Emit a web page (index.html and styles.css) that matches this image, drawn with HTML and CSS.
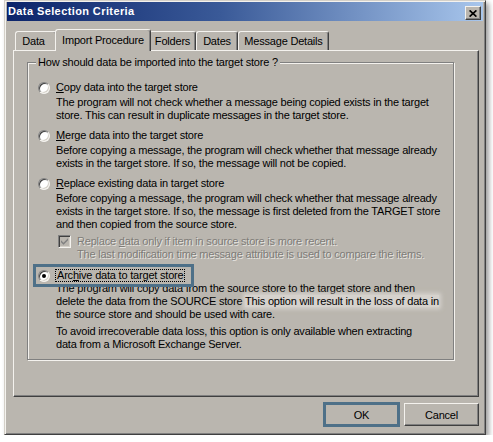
FILE: index.html
```html
<!DOCTYPE html>
<html lang="en">
<head>
<meta charset="utf-8">
<title>Data Selection Criteria</title>
<link rel="stylesheet" href="styles.css">
</head>
<body>
<div class="window">
  <div class="titlebar">
    <span class="title">Data Selection Criteria</span>
    <button class="close" aria-label="Close">
      <svg width="8" height="7" viewBox="0 0 8 7"><path d="M0.6 0.4 L7.4 6.6 M7.4 0.4 L0.6 6.6" stroke="#000" stroke-width="1.7" fill="none"/></svg>
    </button>
  </div>
  <div class="client">
    <div class="tabs">
      <div class="tab tab-data">Data</div>
      <div class="tab tab-import active">Import Procedure</div>
      <div class="tab tab-folders">Folders</div>
      <div class="tab tab-dates">Dates</div>
      <div class="tab tab-details">Message Details</div>
    </div>
    <div class="panel">
      <fieldset class="group">
        <legend>How should data be imported into the target store ?</legend>

        <div class="option">
          <div class="choice"><span class="radio"></span><span class="label"><u>C</u>opy data into the target store</span></div>
          <p class="desc">The program will not check whether a message being copied exists in the target<br>store. This can result in duplicate messages in the target store.</p>
        </div>

        <div class="option">
          <div class="choice"><span class="radio"></span><span class="label"><u>M</u>erge data into the target store</span></div>
          <p class="desc">Before copying a message, the program will check whether that message already<br>exists in the target store. If so, the message will not be copied.</p>
        </div>

        <div class="option">
          <div class="choice"><span class="radio"></span><span class="label"><u>R</u>eplace existing data in target store</span></div>
          <p class="desc">Before copying a message, the program will check whether that message already<br>exists in the target store. If so, the message is first deleted from the TARGET store<br>and then copied from the source store.</p>
          <div class="sub">
            <div class="sub-row">
              <span class="check">
                <svg width="7" height="7" viewBox="0 0 7 7"><path d="M0 2.2 L2.5 4.7 L7 0.2 V2.2 L2.5 6.7 L0 4.2 Z" fill="#808080"/></svg>
              </span>
              <span class="disabled">Replace <u>d</u>ata only if item in source store is more recent.</span>
            </div>
            <div class="disabled sub-note">The last modification time message attribute is used to compare the items.</div>
          </div>
        </div>

        <div class="option option-archive">
          <div class="choice marked"><span class="radio checked"></span><span class="label focus">Arc<u>h</u>ive data to target store</span></div>
          <p class="desc desc-tight">The program will copy data from the source store to the target store and then<br>delete the data from the SOURCE store <span class="hilite">This option will result in the loss of data in</span><br>the source store and should be used with care.</p>
          <p class="desc desc-note">To avoid irrecoverable data loss, this option is only available when extracting<br>data from a Microsoft Exchange Server.</p>
        </div>
      </fieldset>
    </div>
    <div class="buttons">
      <button class="btn btn-ok">OK</button>
      <button class="btn">Cancel</button>
    </div>
  </div>
</div>
</body>
</html>
```

FILE: styles.css
```css
* {
  box-sizing: border-box;
}

body {
  margin: 0;
  background: #fff;
  font-family: "Liberation Sans", Arial, sans-serif;
  font-size: 11px;
  letter-spacing: -0.2px;
  color: #000;
}

/* dialog frame */
.window {
  margin-left: 4px;
  width: 482px;
  height: 435px;
  padding: 1px 2px 2px;
  display: flex;
  flex-direction: column;
  background: #bab6af;
  border: 1px solid;
  border-color: #d4d0c8 #404040 #404040 #d4d0c8;
  box-shadow: inset 1px 1px 0 #f4f2ee, inset -1px -1px 0 #808080, 3px 3px 5px rgba(0, 0, 0, 0.38);
}

.titlebar {
  height: 19px;
  display: flex;
  align-items: flex-start;
  background: linear-gradient(to right, #0c246a 0%, #3a5a98 45%, #a8c6ec 100%);
  color: #fff;
}

.title {
  padding-left: 1px;
  line-height: 19px;
  font-weight: bold;
  letter-spacing: 0.4px;
}

.close {
  margin: 4px 2px 0 auto;
  width: 16px;
  height: 14px;
  padding: 0;
  display: flex;
  align-items: center;
  justify-content: center;
  background: #bab6af;
  border: 1px solid;
  border-color: #f4f2ee #404040 #404040 #f4f2ee;
  box-shadow: inset -1px -1px 0 #808080;
}

.client {
  flex: 1;
  padding: 8px 4px 0 6px;
  display: flex;
  flex-direction: column;
}

/* tab strip */
.tabs {
  height: 21px;
  padding-left: 2px;
  display: flex;
  align-items: flex-end;
}

.tab {
  height: 19px;
  line-height: 18px;
  text-align: center;
  white-space: nowrap;
  background: #bab6af;
  border: 1px solid;
  border-bottom: 0;
  border-color: #f4f2ee #404040 transparent #f4f2ee;
  border-radius: 3px 3px 0 0;
  box-shadow: inset -1px 0 0 #808080;
}

.tab-data { width: 42px; padding-right: 5px; }
.tab-import { width: 92px; }
.tab-folders { width: 47px; }
.tab-dates { width: 42px; }
.tab-details { width: 91px; }

.tab.active {
  position: relative;
  z-index: 1;
  width: 96px;
  height: 22px;
  line-height: 20px;
  margin: 0 -2px -1px;
}

/* page under the tabs */
.panel {
  height: 347px;
  padding: 5px 24px 0 13px;
  border: 1px solid;
  border-color: #f4f2ee #404040 #404040 #f4f2ee;
  box-shadow: inset -1px -1px 0 #808080;
}

.group {
  margin: 0;
  min-width: 0;
  height: 304px;
  padding: 12px 0 0 10px;
  border: 1px solid #808080;
  box-shadow: 1px 1px 0 #f4f2ee, inset 1px 1px 0 #f4f2ee;
}

.group legend {
  margin-left: -2px;
  padding: 0 2px;
  line-height: 13px;
  background: #bab6af;
}

.option + .option {
  margin-top: 7px;
}

.choice {
  display: flex;
  align-items: center;
  height: 13px;
  line-height: 13px;
}

.radio {
  position: relative;
  flex: none;
  width: 12px;
  height: 12px;
  margin-right: 6px;
  border-radius: 50%;
  background: #fff;
  border: 1px solid;
  border-color: #808080 #f4f2ee #f4f2ee #808080;
  box-shadow: inset 1px 1px 0 #404040, inset -1px -1px 0 #d4d0c8;
}

.radio.checked::after {
  content: "";
  position: absolute;
  left: 3px;
  top: 3px;
  width: 4px;
  height: 4px;
  border-radius: 50%;
  background: #000;
}

.label {
  white-space: nowrap;
}

.desc {
  margin: 2px 0 0;
  padding-left: 18px;
  line-height: 13px;
  white-space: nowrap;
}

.desc-tight {
  margin-top: 0;
}

.desc-note {
  margin-top: 4px;
}

/* dependent check box under "Replace" */
.sub {
  margin-top: 4px;
  padding-left: 20px;
  line-height: 13px;
}

.sub-row {
  display: flex;
  align-items: center;
  height: 13px;
}

.check {
  flex: none;
  width: 13px;
  height: 13px;
  margin-right: 6px;
  display: flex;
  align-items: center;
  justify-content: center;
  background: #bab6af;
  border: 1px solid;
  border-color: #808080 #f4f2ee #f4f2ee #808080;
  box-shadow: inset 1px 1px 0 #404040, inset -1px -1px 0 #d4d0c8;
}

.disabled {
  color: #7e7c78;
  text-shadow: 1px 1px 0 #e6e4e0;
  white-space: nowrap;
}

.sub-note {
  padding-left: 19px;
}

/* selected option */
.option.option-archive {
  margin-top: 8px;
}

.choice.marked {
  width: 151px;
  outline: 3px solid #4e7088;
  outline-offset: 2px;
}

.focus {
  padding: 0 1px;
  margin-left: -1px;
  border: 1px dotted #000;
  line-height: 11px;
}

.hilite {
  background: rgba(236, 234, 229, 0.55);
  box-shadow: 0 0 4px 2px rgba(236, 234, 229, 0.55);
}

/* dialog buttons */
.buttons {
  margin-top: 6px;
  display: flex;
  justify-content: flex-end;
  gap: 5px;
}

.btn {
  width: 75px;
  height: 23px;
  padding: 0;
  font: inherit;
  letter-spacing: inherit;
  color: #000;
  background: #bab6af;
  border: 1px solid;
  border-color: #f4f2ee #404040 #404040 #f4f2ee;
  box-shadow: inset -1px -1px 0 #808080;
}

.btn-ok {
  outline: 3px solid #4e7088;
  outline-offset: -2px;
}
```
